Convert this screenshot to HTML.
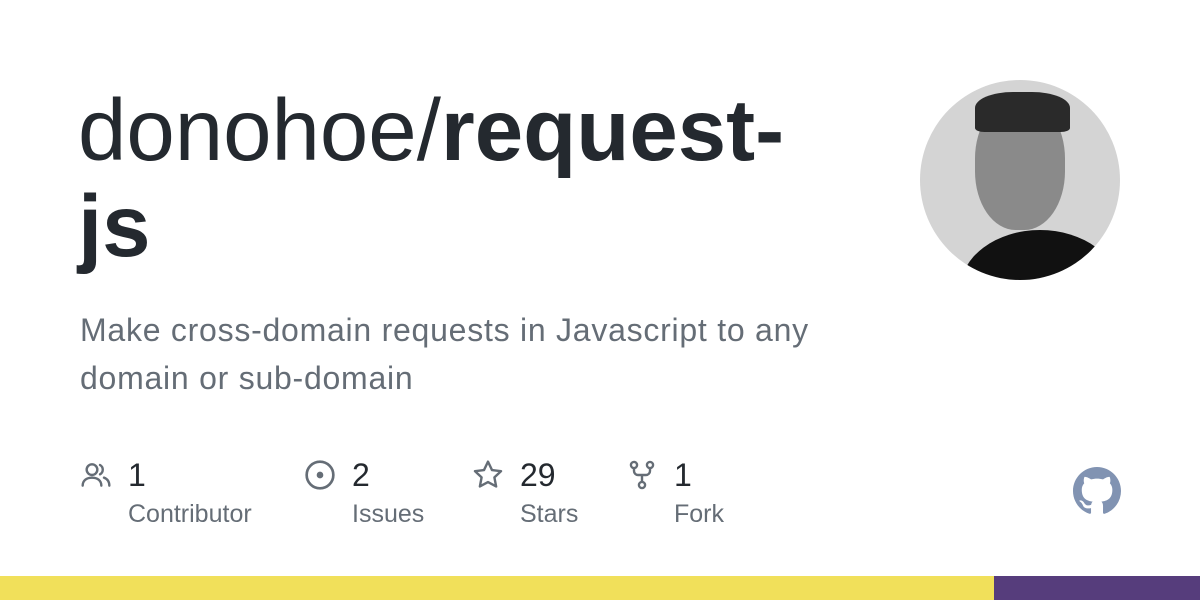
<!DOCTYPE html>
<html><head><meta charset="utf-8"><style>
body{margin:0;width:1200px;height:600px;overflow:hidden;background:#fff;font-family:"Liberation Sans",sans-serif;position:relative}
.t{position:absolute;left:78px;top:83px;font-size:87px;line-height:96px;color:#24292f}
.t b{font-weight:700}
.d{position:absolute;left:80px;top:306px;font-size:32px;line-height:48px;color:#656d76;letter-spacing:0.75px}
.s{position:absolute;top:455px;color:#24292f}
.s .n{position:absolute;left:48px;top:0;font-size:32px;line-height:40px}
.s .l{position:absolute;left:48px;top:45px;font-size:25px;color:#656d76;white-space:nowrap}
.s svg{position:absolute;left:0;top:4px}
</style></head><body>
<div class="t">donohoe/<b>request-<br>js</b></div>
<div class="d">Make cross-domain requests in Javascript to any<br>domain or sub-domain</div>

<div class="s" style="left:80px"><svg width="32" height="32" viewBox="0 0 24 24" fill="none" stroke="#656d76" stroke-width="1.8" stroke-linecap="round"><circle cx="9" cy="8" r="4"/><path d="M2 20c0-4 3-6 7-6s7 2 7 6"/><path d="M15 4.5a4 4 0 010 7M18 14c2.5 1 4 3 4 6"/></svg><div class="n">1</div><div class="l">Contributor</div></div>
<div class="s" style="left:304px"><svg width="32" height="32" viewBox="0 0 24 24" fill="none" stroke="#656d76" stroke-width="2"><circle cx="12" cy="12" r="10"/><circle cx="12" cy="12" r="1.5" fill="#656d76"/></svg><div class="n">2</div><div class="l">Issues</div></div>
<div class="s" style="left:472px"><svg width="32" height="32" viewBox="0 0 24 24" fill="none" stroke="#656d76" stroke-width="1.8" stroke-linejoin="round"><path d="M12 2l3 6.3 6.8.8-5 4.7 1.3 6.8L12 17.3 5.9 20.6l1.3-6.8-5-4.7 6.8-.8z"/></svg><div class="n">29</div><div class="l">Stars</div></div>
<div class="s" style="left:626px"><svg width="32" height="32" viewBox="0 0 24 24" fill="none" stroke="#656d76" stroke-width="1.8"><circle cx="6" cy="4.5" r="2.3"/><circle cx="18" cy="4.5" r="2.3"/><circle cx="12" cy="19.5" r="2.3"/><path d="M6 7v2a3 3 0 003 3h6a3 3 0 003-3V7M12 12v5"/></svg><div class="n">1</div><div class="l">Fork</div></div>

<div style="position:absolute;left:920px;top:80px;width:200px;height:200px;border-radius:50%;background:#d4d4d4;overflow:hidden">
<div style="position:absolute;left:40px;top:150px;width:160px;height:120px;border-radius:50%;background:#111"></div>
<div style="position:absolute;left:55px;top:20px;width:90px;height:130px;border-radius:45%;background:#8a8a8a"></div>
<div style="position:absolute;left:55px;top:12px;width:95px;height:40px;border-radius:40% 40% 10% 10%;background:#2a2a2a"></div>
</div>

<svg style="position:absolute;left:1073px;top:467px" width="48" height="48" viewBox="0 0 16 16"><path fill="#8193b2" d="M8 0C3.58 0 0 3.58 0 8c0 3.540 2.29 6.530 5.470 7.590.4.07.55-.17.55-.38 0-.19-.01-.82-.01-1.49-2.01.37-2.530-.49-2.690-.94-.09-.23-.48-.94-.82-1.130-.28-.15-.68-.52-.01-.53.63-.01 1.080.58 1.230.82.72 1.210 1.870.87 2.330.66.07-.52.28-.87.51-1.07-1.780-.2-3.640-.89-3.640-3.950 0-.87.31-1.590.82-2.150-.08-.2-.36-1.020.08-2.120 0 0 .67-.21 2.2.82.64-.18 1.320-.27 2-.27.68 0 1.360.09 2 .27 1.530-1.040 2.2-.82 2.2-.82.44 1.1.16 1.920.08 2.120.51.56.82 1.270.82 2.150 0 3.070-1.870 3.750-3.650 3.950.29.25.54.73.54 1.480 0 1.070-.01 1.930-.01 2.2 0 .21.15.46.55.38A8.013 8.013 0 0016 8c0-4.420-3.580-8-8-8z"/></svg>

<div style="position:absolute;left:0;top:576px;width:994px;height:24px;background:#f1e05a"></div>
<div style="position:absolute;left:994px;top:576px;width:206px;height:24px;background:#563d7c"></div>
</body></html>
